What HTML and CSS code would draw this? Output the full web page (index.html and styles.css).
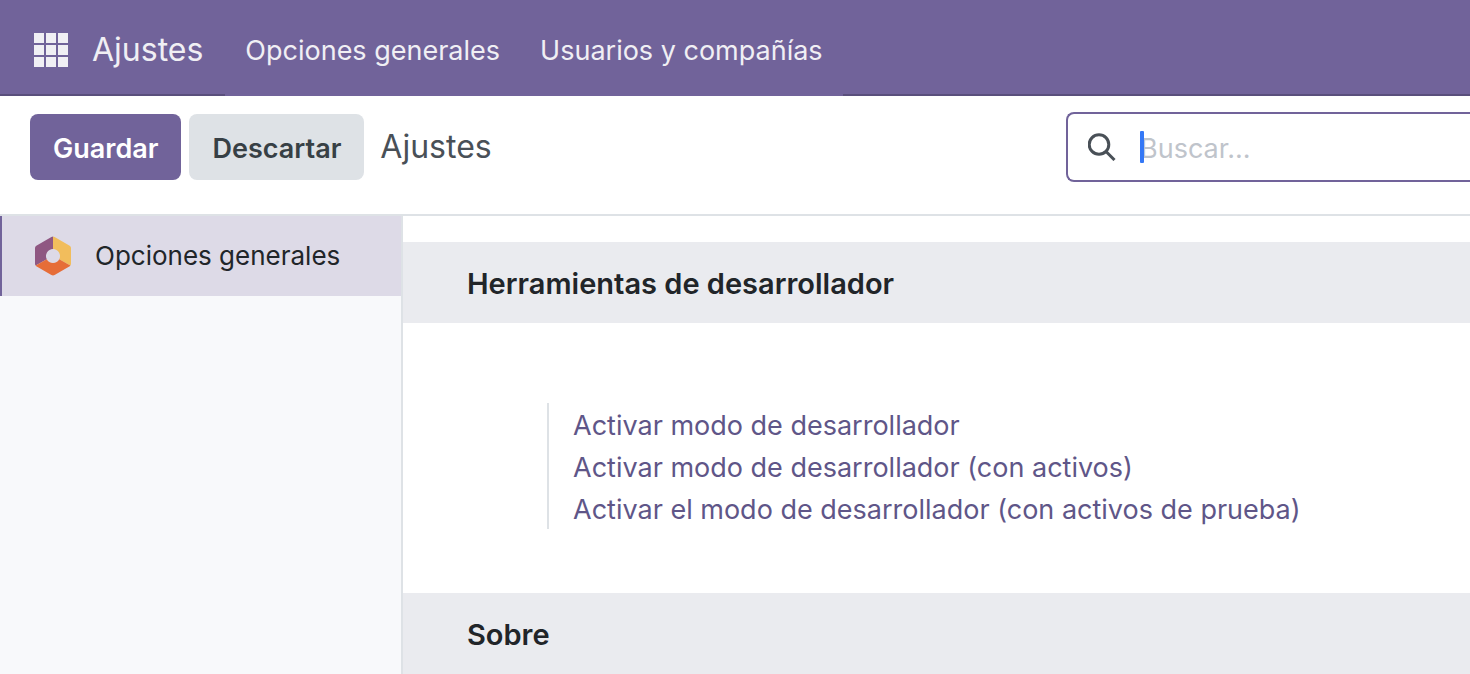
FILE: index.html
```html
<!DOCTYPE html>
<html lang="es">
<head>
<meta charset="utf-8">
<title>Ajustes</title>
<link rel="stylesheet" href="styles.css">
</head>
<body>
<header class="navbar">
  <div class="navbar-brand">
    <button class="apps-button" type="button" aria-label="Aplicaciones">
      <svg class="apps-icon" viewBox="0 0 34 34" aria-hidden="true">
        <path d="M0 0h10v10H0zM12 0h10v10H12zM24 0h10v10H24zM0 12h10v10H0zM12 12h10v10H12zM24 12h10v10H24zM0 24h10v10H0zM12 24h10v10H12zM24 24h10v10H24z"/>
      </svg>
    </button>
    <a class="brand" href="#">Ajustes</a>
  </div>
  <nav class="menu">
    <a class="menu-link" href="#">Opciones generales</a>
    <a class="menu-link" href="#">Usuarios y compañías</a>
  </nav>
  <div class="navbar-rest"></div>
</header>
<section class="control-panel">
  <div class="actions">
    <button class="btn btn-primary" type="button">Guardar</button>
    <button class="btn btn-secondary" type="button">Descartar</button>
    <h1 class="title">Ajustes</h1>
  </div>
  <label class="search">
    <svg class="search-icon" viewBox="0 0 28 28" aria-hidden="true">
      <circle cx="11" cy="11.5" r="9.800"/>
      <path d="M18 18.500L26.500 27"/>
    </svg>
    <span class="search-field">
      <input class="search-input" type="text" placeholder="Buscar..." aria-label="Buscar">
      <span class="caret"></span>
    </span>
  </label>
</section>
<div class="content">
  <aside class="sidebar">
    <a class="tab" href="#">
      <svg class="tab-icon" viewBox="0 0 36 40" aria-hidden="true">
        <path class="hex-purple" d="M18 0.5V13A7 7 0 0 0 11.800 23.300L0.700 29.500Q0 28.800 0 28V12Q0 10.500 1.300 9.700L16.400 1Q17.200 0.500 18 0.500z"/>
        <path class="hex-yellow" d="M18 0.500V13A7 7 0 0 1 24.200 23.300L35.300 29.500Q36 28.800 36 28V12Q36 10.500 34.700 9.700L19.600 1Q18.800 0.500 18 0.500z"/>
        <path class="hex-orange" d="M0.700 29.500L11.800 23.300A7 7 0 0 0 24.200 23.300L35.300 29.500Q35.200 30 34.700 30.300L19.600 39Q18 39.900 16.400 39L1.300 30.300Q0.800 30 0.700 29.500z"/>
      </svg>
      <span>Opciones generales</span>
    </a>
  </aside>
  <main class="settings">
    <h2 class="section-title">Herramientas de desarrollador</h2>
    <div class="section-body">
      <div class="links">
        <a class="link" href="#">Activar modo de desarrollador</a>
        <a class="link" href="#">Activar modo de desarrollador (con activos)</a>
        <a class="link" href="#">Activar el modo de desarrollador (con activos de prueba)</a>
      </div>
    </div>
    <h2 class="section-title">Sobre</h2>
  </main>
</div>
</body>
</html>
```
FILE: styles.css
```css
* { box-sizing: border-box; }
body {
  margin: 0;
  min-height: 100vh;
  display: flex;
  flex-direction: column;
  overflow: hidden;
  background: #fff;
  color: #212529;
  font-family: Inter, "Liberation Sans", sans-serif;
  font-size: 27px;
  line-height: 42px;
}
a { color: inherit; text-decoration: none; }
button, input { font: inherit; }
h1, h2 { margin: 0; }

.navbar {
  display: flex;
  height: 96px;
  background: #71639a;
  color: #f0eff4;
}
.navbar-brand, .navbar-rest { border-bottom: 2px solid #5a4f7c; }
.navbar-brand {
  display: flex;
  align-items: center;
  gap: 24px;
  padding: 6px 22px 0 34px;
}
.navbar-rest { flex: 1; }
.apps-button {
  display: flex;
  padding: 0;
  border: 0;
  background: none;
  color: inherit;
}
.apps-icon { width: 34px; height: 34px; fill: currentColor; }
.brand { font-size: 32px; }
.menu { display: flex; align-items: center; padding-top: 6px; }
.menu-link { padding: 0 20px; }

.control-panel {
  display: flex;
  justify-content: space-between;
  align-items: flex-start;
  height: 120px;
  padding: 16px 0 0 30px;
  border-bottom: 2px solid #dee2e6;
}
.actions { display: flex; align-items: center; gap: 8px; padding-top: 2px; }
.btn {
  height: 66px;
  padding: 4px 23px 0;
  border: 0;
  border-radius: 8px;
  font-weight: 600;
}
.btn-primary { background: #71639a; color: #fff; }
.btn-secondary { background: #dee2e6; color: #374045; }
.title {
  padding-left: 8px;
  color: #495057;
  font-size: 32px;
  font-weight: 400;
}
.search {
  display: flex;
  align-items: center;
  gap: 24px;
  width: 404px;
  height: 70px;
  padding-left: 20px;
  border: 2px solid #71639a;
  border-right: 0;
  border-radius: 8px 0 0 8px;
}
.search-icon {
  flex: none;
  width: 28px;
  height: 28px;
  fill: none;
  stroke: #495057;
  stroke-width: 3;
}
.search-field { position: relative; flex: 1; display: flex; }
.search-input {
  width: 100%;
  padding: 4px 0 0;
  border: 0;
  outline: 0;
  background: none;
}
.search-input::placeholder { color: #bfc4cb; opacity: 1; }
.caret {
  position: absolute;
  top: 7px;
  left: 0;
  width: 4px;
  height: 32px;
  border-radius: 1px;
  background: #3478f6;
}

.content { flex: 1; display: flex; }
.sidebar {
  flex: none;
  width: 403px;
  border-right: 2px solid #dee2e6;
  background: #f8f9fb;
}
.tab {
  display: flex;
  align-items: center;
  gap: 24px;
  height: 80px;
  padding: 0 33px;
  border-left: 2px solid #71639a;
  background: #dddae7;
  font-size: 26px;
}
.tab-icon { width: 36px; height: 40px; }
.hex-purple { fill: #8f5782; }
.hex-yellow { fill: #f1bd5c; }
.hex-orange { fill: #e66d38; }
.settings { flex: 1; padding-top: 26px; }
.section-title {
  height: 81px;
  padding: 21px 64px 0;
  background: #eaebef;
  font-size: 29px;
  font-weight: 600;
}
.section-body { padding: 80px 144px 64px; }
.links {
  display: flex;
  flex-direction: column;
  align-items: flex-start;
  padding-left: 24px;
  border-left: 2px solid #dee2e6;
}
.link {
  padding-top: 4px;
  color: #5f5688;
  line-height: 38px;
}
```
